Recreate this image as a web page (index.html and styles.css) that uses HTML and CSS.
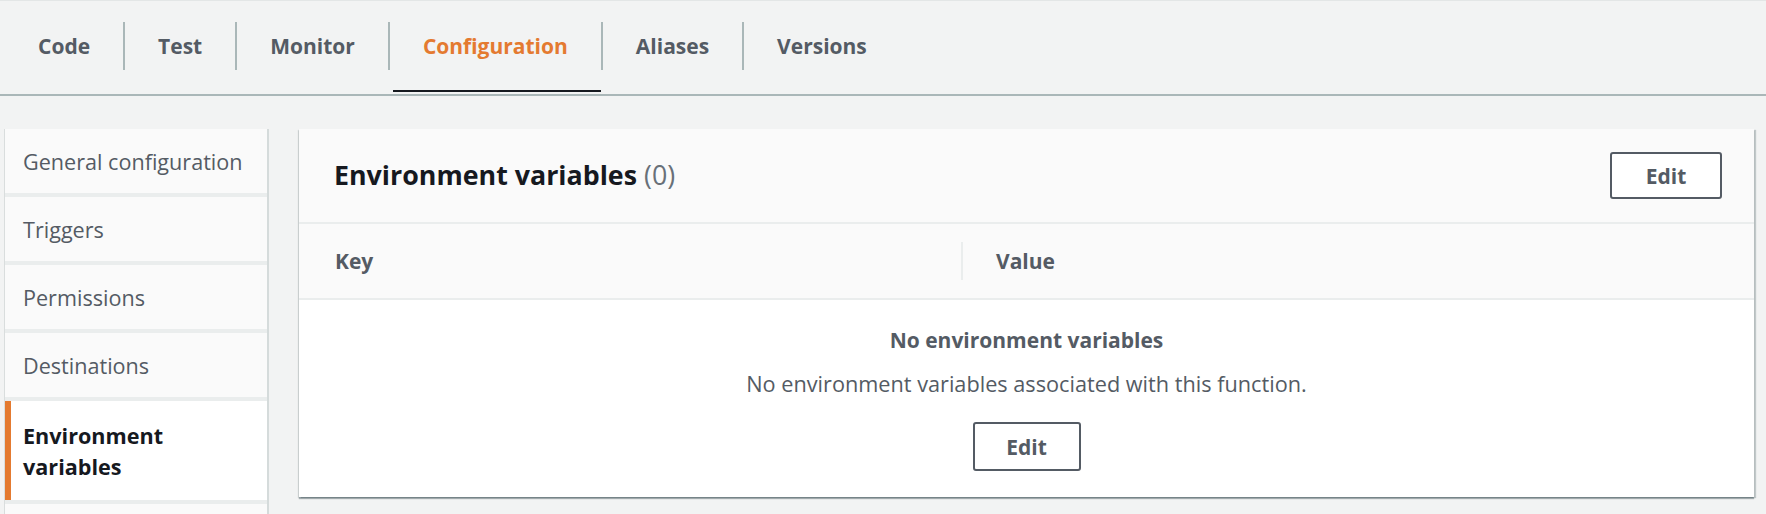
FILE: index.html
```html
<!DOCTYPE html>
<html lang="en">
<head>
<meta charset="utf-8">
<title>Configuration</title>
<link rel="stylesheet" href="styles.css">
</head>
<body>
<nav class="tabs">
  <a class="tab"><span class="tab-label">Code</span><span class="tab-line"></span></a>
  <a class="tab"><span class="tab-label">Test</span><span class="tab-line"></span></a>
  <a class="tab"><span class="tab-label">Monitor</span><span class="tab-line"></span></a>
  <a class="tab tab-active"><span class="tab-label">Configuration</span><span class="tab-line"></span></a>
  <a class="tab"><span class="tab-label">Aliases</span><span class="tab-line"></span></a>
  <a class="tab"><span class="tab-label">Versions</span><span class="tab-line"></span></a>
</nav>
<main class="content">
  <aside class="side-nav">
    <a class="nav-item">General configuration</a>
    <a class="nav-item">Triggers</a>
    <a class="nav-item">Permissions</a>
    <a class="nav-item">Destinations</a>
    <a class="nav-item nav-active">Environment variables</a>
    <div class="nav-item nav-more"></div>
  </aside>
  <section class="panel">
    <header class="panel-header">
      <h2 class="panel-title">Environment variables <span class="count">(0)</span></h2>
      <button class="btn btn-header">Edit</button>
    </header>
    <div class="col-header">
      <div class="col col-key">Key</div>
      <div class="col col-value">Value</div>
    </div>
    <div class="empty">
      <div class="empty-title">No environment variables</div>
      <div class="empty-desc">No environment variables associated with this function.</div>
      <button class="btn btn-body">Edit</button>
    </div>
  </section>
</main>
</body>
</html>
```
FILE: styles.css
```css
* { box-sizing: border-box; }
html, body {
  margin: 0;
  padding: 0;
}
body {
  background: #f2f3f3;
  font-family: "Open Sans", "Noto Sans", sans-serif;
  color: #545b64;
  overflow: hidden;
}

/* Tabs */
.tabs {
  display: flex;
  padding-left: 5px;
  border-top: 1px solid #e3e6e6;
  border-bottom: 2px solid #aab7b8;
}
.tab {
  display: flex;
  flex-direction: column;
  padding-top: 21px;
  padding-bottom: 2px;
  font-weight: 700;
  font-size: 21px;
  color: #545b64;
}
.tab-label {
  height: 48px;
  line-height: 48px;
  padding: 0 33px;
  border-left: 2px solid #aab7b8;
}
.tab:first-child .tab-label {
  border-left: none;
}
.tab-line {
  height: 2px;
  margin-top: 20px;
  margin-left: 5px;
}
.tab-active { color: #e47a30; }
.tab-active .tab-line { background: #16191f; }

/* Content */
.content {
  display: flex;
  align-items: flex-start;
  gap: 30px;
  padding: 33px 12px 0 4px;
}

.side-nav {
  width: 265px;
  flex: none;
  display: flex;
  flex-direction: column;
  gap: 4px;
  background: #eaeded;
  border-left: 1px solid #d9dddd;
  border-right: 2px solid #d5dbdb;
}
.nav-item {
  display: block;
  background: #fafafa;
  padding: 16.5px 24px 16.5px 18px;
  font-size: 21.6px;
  line-height: 31px;
  color: #545b64;
}
.nav-more {
  height: 64px;
}
.nav-active {
  background: #ffffff;
  border-left: 6px solid #e47a30;
  padding: 18.5px 24px 18.5px 12px;
  font-weight: 700;
  color: #16191f;
}

.panel {
  flex: 1;
  background: #ffffff;
  box-shadow: 0 2px 1px 0 rgba(0, 28, 36, 0.3), 2px 1px 1px 0 rgba(0, 28, 36, 0.2), -1px 1px 1px 0 rgba(0, 28, 36, 0.12);
}
.panel-header {
  display: flex;
  align-items: center;
  justify-content: space-between;
  height: 95px;
  padding: 0 32px 0 35px;
  background: #fafafa;
  border-bottom: 2px solid #eaeded;
}
.panel-title {
  margin: 0;
  font-size: 26.8px;
  font-weight: 700;
  color: #16191f;
  line-height: 1;
}
.count {
  font-weight: 400;
  color: #687078;
}

.btn {
  font-family: inherit;
  font-weight: 700;
  font-size: 21px;
  color: #545b64;
  background: #ffffff;
  border: 2px solid #545b64;
  border-radius: 3px;
}
.btn-header {
  width: 112px;
  height: 47px;
}
.btn-body {
  width: 108px;
  height: 49px;
  margin-top: 23px;
}

.col-header {
  display: flex;
  align-items: center;
  height: 76px;
  background: #fafafa;
  border-bottom: 2px solid #eaeded;
  font-weight: 700;
  font-size: 21px;
}
.col-key {
  width: 662px;
  padding-left: 36px;
}
.col-value {
  padding-left: 33px;
  border-left: 2px solid #eaeded;
  height: 38px;
  line-height: 38px;
}

.empty {
  display: flex;
  flex-direction: column;
  align-items: center;
  padding: 25px 0 26px;
  font-size: 21px;
  line-height: 30px;
}
.empty-title {
  font-weight: 700;
}
.empty-desc {
  margin-top: 14px;
  font-size: 21.7px;
}
```
